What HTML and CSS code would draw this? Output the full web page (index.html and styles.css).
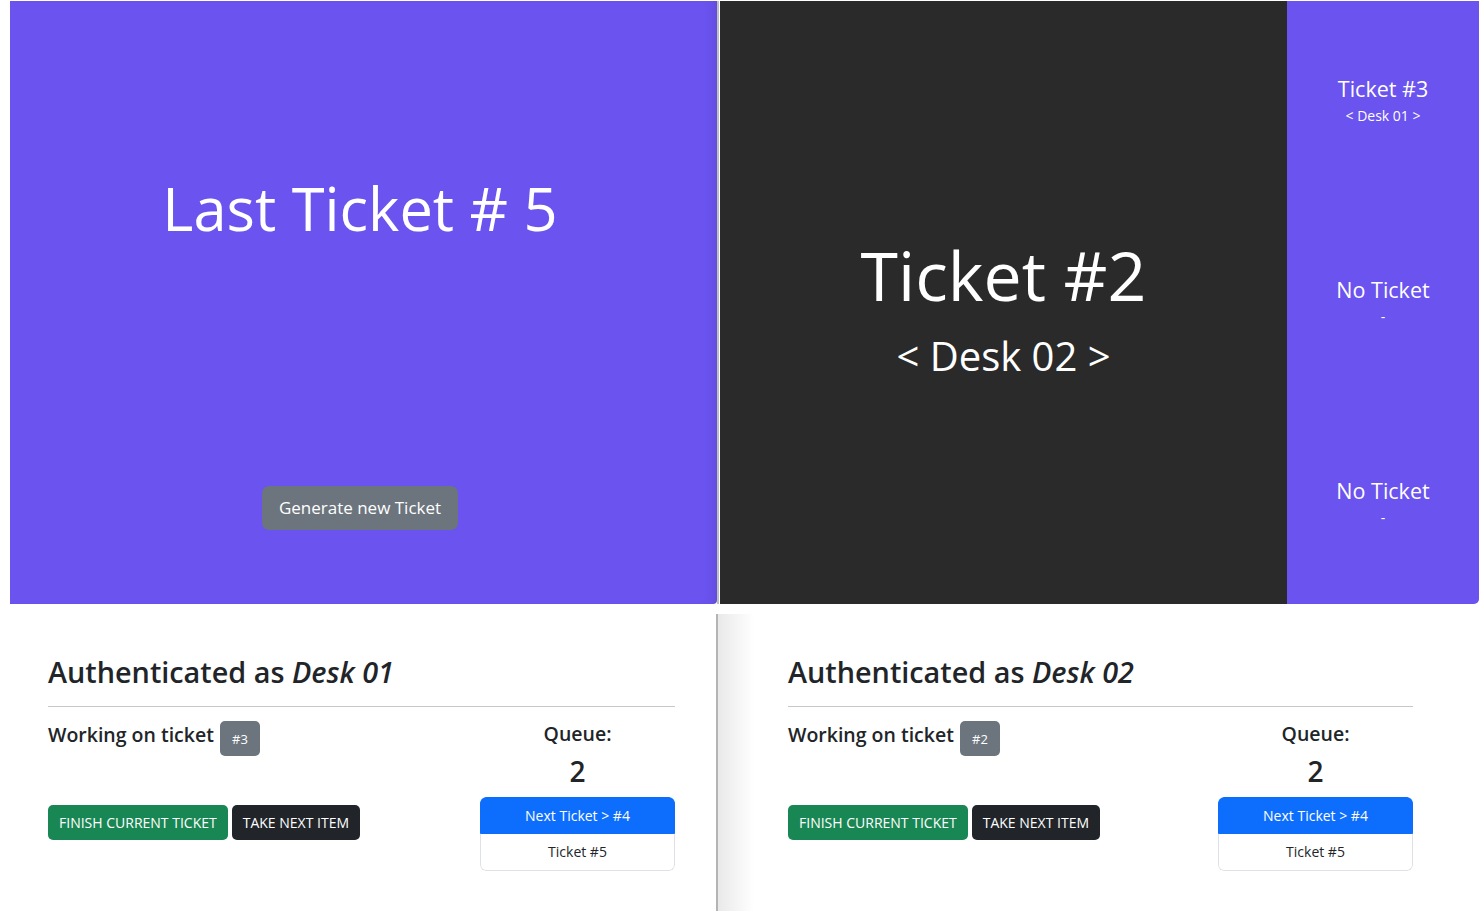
FILE: index.html
```html
<!DOCTYPE html>
<html lang="en">
<head>
  <meta charset="UTF-8">
  <title>Ticket App</title>
  <meta name="viewport" content="width=device-width, initial-scale=1">
  <link rel="stylesheet" href="styles.css">
</head>
<body>
  <div class="top">
    <section class="issuer">
      <h1 class="issuer__title">Last Ticket # 5</h1>
      <button class="btn btn--generate">Generate new Ticket</button>
    </section>
    <div class="split"></div>
    <section class="display">
      <div class="display__main">
        <div class="display__ticket">Ticket #2</div>
        <div class="display__desk">&lt; Desk 02 &gt;</div>
      </div>
      <div class="display__side">
        <div class="side-item">
          <div class="side-item__ticket">Ticket #3</div>
          <div class="side-item__desk">&lt; Desk 01 &gt;</div>
        </div>
        <div class="side-item">
          <div class="side-item__ticket">No Ticket</div>
          <div class="side-item__desk">-</div>
        </div>
        <div class="side-item">
          <div class="side-item__ticket">No Ticket</div>
          <div class="side-item__desk">-</div>
        </div>
      </div>
    </section>
  </div>

  <div class="bottom">
    <section class="desk">
      <div class="desk__inner">
        <h3 class="desk__title">Authenticated as <em>Desk 01</em></h3>
        <hr class="desk__rule">
        <div class="desk__row">
          <div class="desk__work">
            <div class="desk__working">
              <h5 class="desk__label">Working on ticket</h5>
              <span class="badge">#3</span>
            </div>
            <div class="desk__actions">
              <button class="btn btn--finish">FINISH CURRENT TICKET</button>
              <button class="btn btn--take">TAKE NEXT ITEM</button>
            </div>
          </div>
          <div class="queue">
            <h5 class="queue__label">Queue:</h5>
            <div class="queue__count">2</div>
            <ul class="list">
              <li class="list__item list__item--active">Next Ticket &gt; #4</li>
              <li class="list__item">Ticket #5</li>
            </ul>
          </div>
        </div>
      </div>
    </section>
    <div class="split split--bottom"></div>
    <section class="desk desk--second">
      <div class="desk__inner">
        <h3 class="desk__title">Authenticated as <em>Desk 02</em></h3>
        <hr class="desk__rule">
        <div class="desk__row">
          <div class="desk__work">
            <div class="desk__working">
              <h5 class="desk__label">Working on ticket</h5>
              <span class="badge">#2</span>
            </div>
            <div class="desk__actions">
              <button class="btn btn--finish">FINISH CURRENT TICKET</button>
              <button class="btn btn--take">TAKE NEXT ITEM</button>
            </div>
          </div>
          <div class="queue">
            <h5 class="queue__label">Queue:</h5>
            <div class="queue__count">2</div>
            <ul class="list">
              <li class="list__item list__item--active">Next Ticket &gt; #4</li>
              <li class="list__item">Ticket #5</li>
            </ul>
          </div>
        </div>
      </div>
    </section>
  </div>
</body>
</html>
```

FILE: styles.css
```css
body {
  margin: 0;
  font-family: "Open Sans", "Noto Sans", sans-serif;
  color: #212529;
  background-color: #fff;
  overflow: hidden;
}
.top {
  display: flex;
  height: 604px;
  padding-top: 1px;
  box-sizing: border-box;
}
.issuer {
  display: flex;
  flex-direction: column;
  align-items: center;
  width: 707px;
  margin-left: 10px;
  padding-right: 7px;
  box-sizing: border-box;
  background-color: #6a53ee;
  border-bottom-right-radius: 4px;
  box-shadow: inset -10px 0 14px -10px rgba(0, 0, 0, 0.12);
}
.issuer__title {
  margin: 171px 0 0;
  font-size: 59.6px;
  font-weight: 400;
  line-height: 1.2;
  color: #fff;
}
.btn {
  border: 1px solid transparent;
  color: #fff;
  font-family: inherit;
  cursor: pointer;
}
.btn--generate {
  margin-top: auto;
  margin-bottom: 74px;
  padding: 8px 16px;
  font-size: 17px;
  line-height: 26px;
  background-color: #6c757d;
  border-radius: 7px;
}
.split {
  width: 2px;
  margin-right: 1px;
  background-color: #bfbfbf;
}
.display {
  display: flex;
  flex: 1;
}
.display__main {
  display: flex;
  flex-direction: column;
  align-items: center;
  width: 567px;
  padding-top: 233px;
  box-sizing: border-box;
  background-color: #2a2a2a;
  color: #fff;
}
.display__ticket {
  font-size: 68px;
  line-height: 1.2;
}
.display__desk {
  margin-top: 16px;
  font-size: 40px;
  line-height: 1.2;
}
.display__side {
  display: flex;
  flex-direction: column;
  flex: 1;
  background-color: #6a53ee;
  border-bottom-right-radius: 5px;
  color: #fff;
}
.side-item {
  display: flex;
  flex: 1;
  flex-direction: column;
  align-items: center;
  padding-top: 75px;
}
.side-item__ticket {
  font-size: 21.5px;
  line-height: 1.2;
}
.side-item__desk {
  margin-top: 6px;
  font-size: 14px;
  line-height: 1.2;
}
.bottom {
  display: flex;
  height: 297px;
  margin-top: 10px;
}
.desk {
  width: 716px;
}
.split--bottom {
  margin-right: 0;
  background-color: #b4b4b4;
}
.desk--second {
  flex: 1;
  background: linear-gradient(to right, #e9e9e9, #fff 36px);
}
.desk__inner {
  width: 627px;
  margin-left: 48px;
  padding-top: 41px;
}
.desk--second .desk__inner {
  width: 625px;
  margin-left: 70px;
}
.desk__title {
  margin: 0;
  font-size: 28.8px;
  font-weight: 600;
  line-height: 1.2;
}
.desk__rule {
  margin: 16px 0 14px;
  border: 0;
  border-top: 1px solid #c6c7c8;
}
.desk__row {
  display: grid;
  grid-template-columns: 1fr 195px;
}
.desk__working {
  display: flex;
  align-items: flex-start;
  gap: 6px;
}
.desk__label {
  margin: 2px 0 0;
  font-size: 19.5px;
  font-weight: 600;
  line-height: 1.2;
}
.badge {
  display: inline-flex;
  align-items: center;
  justify-content: center;
  width: 40px;
  height: 35px;
  padding-top: 2px;
  box-sizing: border-box;
  background-color: #6c757d;
  border-radius: 5px;
  color: #fff;
  font-size: 13px;
}
.desk__actions {
  display: flex;
  gap: 4px;
  margin-top: 49px;
}
.btn--finish,
.btn--take {
  padding: 6px 10px;
  font-size: 14px;
  line-height: 21px;
  border-radius: 5px;
}
.btn--finish {
  background-color: #198754;
}
.btn--take {
  background-color: #212529;
}
.queue {
  display: flex;
  flex-direction: column;
  align-items: center;
}
.queue__label {
  margin: 1px 0 0;
  font-size: 19.5px;
  font-weight: 600;
  line-height: 1.2;
}
.queue__count {
  margin-top: 10px;
  font-size: 28px;
  font-weight: 600;
  line-height: 1.2;
}
.list {
  width: 100%;
  margin: 8px 0 0;
  padding: 0;
  list-style: none;
  border-radius: 6px;
  overflow: hidden;
}
.list__item {
  padding: 7px 16px 8px;
  font-size: 14px;
  line-height: 21px;
  text-align: center;
  border: 1px solid #dee2e6;
  border-top: 0;
  border-radius: 0 0 6px 6px;
}
.list__item--active {
  padding-bottom: 7px;
  background-color: #0d6efd;
  border: 1px solid #0d6efd;
  border-radius: 6px 6px 0 0;
  color: #fff;
}
```
